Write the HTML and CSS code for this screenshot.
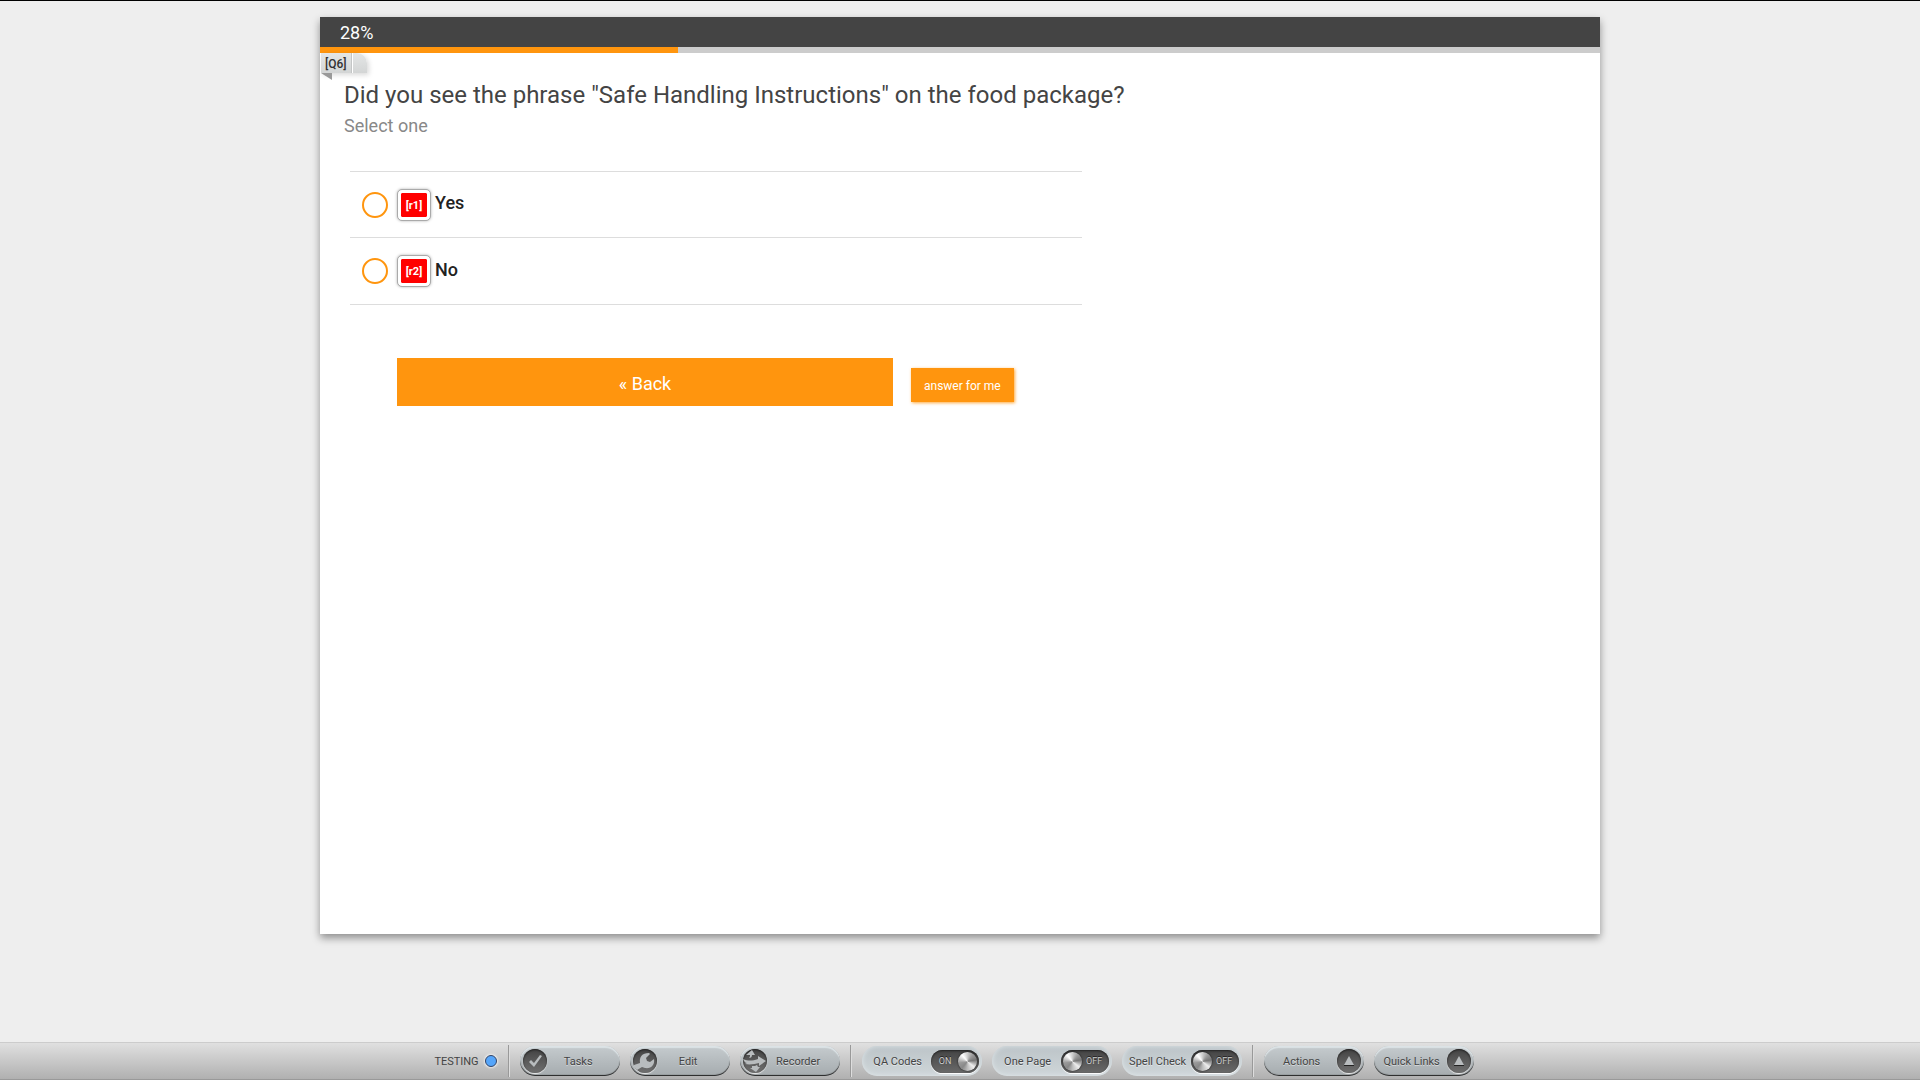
FILE: index.html
```html
<!DOCTYPE html>
<html lang="en">
<head>
  <meta charset="UTF-8">
  <meta name="viewport" content="width=device-width, initial-scale=1.0">
  <title>Survey</title>
  <link rel="stylesheet" href="styles.css">
</head>
<body>
  <main class="survey">
    <div class="progress-text">28%</div>
    <div class="progress-track"><div class="progress-bar" style="width: 28%"></div></div>

    <form class="question">
      <div class="qa-tag">
        <span class="qa-tag-label">[Q6]</span>
        <span class="qa-tag-end"></span>
        <span class="qa-tag-fold"></span>
      </div>
      <h1 class="question-text">Did you see the phrase "Safe Handling Instructions" on the food package?</h1>
      <h2 class="instruction-text">Select one</h2>

      <div class="answers">
        <label class="answer">
          <input type="radio" name="q6" value="r1">
          <span class="qa-code">[r1]</span>
          <span class="answer-text">Yes</span>
        </label>
        <label class="answer">
          <input type="radio" name="q6" value="r2">
          <span class="qa-code">[r2]</span>
          <span class="answer-text">No</span>
        </label>
      </div>

      <div class="nav-buttons">
        <button type="button" class="back-button">« Back</button>
        <button type="button" class="auto-button">answer for me</button>
      </div>
    </form>
  </main>

  <!-- Testing toolbar -->
  <footer class="toolbar">
    <div class="mode">TESTING <span class="led"></span></div>
    <span class="separator"></span>

    <button type="button" class="tool tool-left">
      <span class="tool-icon">
        <svg viewBox="0 0 24 24"><path d="M6 13l2-2 3 3 6-8 2 1-8 11z"/></svg>
      </span>
      <span class="tool-label">Tasks</span>
    </button>
    <button type="button" class="tool tool-left">
      <span class="tool-icon">
        <svg viewBox="0 0 24 24"><path d="M1 16l6-2C6 8 9 4 16 4l1 1-4 4 1 3 3 1 4-3c1 6-3 10-9 9l-3-1-5 3-3-3z"/></svg>
      </span>
      <span class="tool-label">Edit</span>
    </button>
    <button type="button" class="tool tool-left">
      <span class="tool-icon">
        <svg viewBox="0 0 24 24"><path d="M0 10c5 2 9 2 15 0V7l8 5-7 5v-3c-4 1-9 2-14 1l2-1c-2 0-3-2-4-4zM3 6l6-5 3 5H9c0 2-1 3-3 3 1-1 1-2 1-3zM9 17h3l2-1 1 2h2l-4 5-6-4h2z"/></svg>
      </span>
      <span class="tool-label">Recorder</span>
    </button>
    <span class="separator"></span>

    <label class="toggle">
      <span class="toggle-label">QA Codes</span>
      <input type="checkbox" class="toggle-input" checked>
      <span class="switch"><span class="state">ON</span><span class="knob"></span></span>
    </label>
    <label class="toggle">
      <span class="toggle-label">One Page</span>
      <input type="checkbox" class="toggle-input">
      <span class="switch"><span class="knob"></span><span class="state">OFF</span></span>
    </label>
    <label class="toggle">
      <span class="toggle-label">Spell Check</span>
      <input type="checkbox" class="toggle-input">
      <span class="switch"><span class="knob"></span><span class="state">OFF</span></span>
    </label>
    <span class="separator"></span>

    <button type="button" class="tool">
      <span class="tool-label">Actions</span>
      <span class="tool-icon">
        <svg viewBox="0 0 24 24"><path d="M12 7l5 9H7z"/><path class="shade" d="M7 16h10v1H7z"/></svg>
      </span>
    </button>
    <button type="button" class="tool">
      <span class="tool-label">Quick Links</span>
      <span class="tool-icon">
        <svg viewBox="0 0 24 24"><path d="M12 7l5 9H7z"/><path class="shade" d="M7 16h10v1H7z"/></svg>
      </span>
    </button>
  </footer>
</body>
</html>
```
FILE: styles.css
```css
* {
  box-sizing: border-box;
}
body {
  margin: 0;
  min-height: 100vh;
  display: flex;
  flex-direction: column;
  border-top: 1px solid #000;
  background-color: #eee;
  font-family: Roboto, Arial, sans-serif;
  color: #444;
}
button {
  font-family: inherit;
  border: none;
  padding: 0;
  cursor: pointer;
}
.survey {
  width: 100%;
  max-width: 1280px;
  min-height: calc(85vh - 1px);
  margin: 16px auto;
  background-color: #fff;
  box-shadow: 0 4px 8px rgba(0, 0, 0, 0.4);
}
.progress-text {
  height: 30px;
  padding-left: 20px;
  background-color: #444;
  color: #fff;
  font-size: 18px;
  line-height: 32px;
}
.progress-track {
  height: 6px;
  background-color: #ccc;
}
.progress-bar {
  height: 100%;
  background-color: #ff950e;
}
.question {
  position: relative;
  padding: 26px 24px;
}

/* Question code tag */
.qa-tag {
  position: absolute;
  top: 0;
  left: 1px;
  display: flex;
  height: 20px;
  border-top-right-radius: 10px;
  background: linear-gradient(#e4e6e6, #d3d5d5);
  box-shadow: 2px 2px 5px rgba(0, 0, 0, 0.15);
  color: #333;
  font-size: 12px;
  font-weight: 500;
  line-height: 22px;
}
.qa-tag-label {
  padding: 0 4px;
  border-right: 1px solid #c4c6c6;
}
.qa-tag-end {
  width: 15px;
  border-left: 1px solid #fff;
}
.qa-tag-fold {
  position: absolute;
  top: 100%;
  left: 0;
  border-top: 7px solid #999;
  border-left: 11px solid transparent;
}
.question-text,
.instruction-text {
  margin: 0;
  font-weight: 400;
}
.question-text {
  font-size: 24px;
  line-height: 32px;
}
.instruction-text {
  color: #888;
  font-size: 18px;
  line-height: 30px;
}

/* Answer list */
.answers {
  max-width: 732px;
  margin: 30px 0 0 6px;
  border-top: 1px solid #ddd;
}
.answer {
  display: flex;
  align-items: center;
  height: 66px;
  padding-left: 12px;
  border-bottom: 1px solid #ddd;
}
.answer:last-child {
  height: 67px;
}
.answer input {
  appearance: none;
  width: 26px;
  height: 26px;
  margin: 0 9px 0 0;
  border: 2px solid #ff950e;
  border-radius: 50%;
}
.answer input:checked {
  background-color: #ff950e;
}
.qa-code {
  width: 34px;
  height: 32px;
  padding: 3px;
  border: 1px solid #aaa;
  border-radius: 5px;
  background: #f00 content-box;
  box-shadow: 0 0 3px rgba(0, 0, 0, 0.3), inset 0 0 0 3px #fff;
  color: #fff;
  font-size: 11px;
  font-weight: 700;
  line-height: 25px;
  text-align: center;
}
.answer-text {
  padding: 0 0 4px 4px;
  color: #222;
  font-size: 18px;
  font-weight: 500;
}
.nav-buttons {
  display: flex;
  align-items: center;
  gap: 18px;
  max-width: 670px;
  margin: 53px 0 0 53px;
}
.back-button {
  flex: 0 1 496px;
  height: 48px;
  padding-top: 2px;
  background-color: #ff950e;
  color: #fff;
  font-size: 18px;
}
.auto-button {
  height: 34px;
  margin-top: 6px;
  padding: 2px 13px 0;
  background-color: #ff950e;
  box-shadow: 1px 1px 3px rgba(255, 149, 14, 0.8);
  color: #fff;
  font-size: 12px;
}

/* Toolbar */
.toolbar {
  display: flex;
  justify-content: center;
  align-items: center;
  gap: 10px;
  height: 38px;
  margin-top: auto;
  padding-right: 12px;
  border-top: 1px solid #ccc;
  border-bottom: 1px solid #999;
  background: linear-gradient(#e0e0e0, #b0b0b0);
  color: #444;
  font-size: 11px;
}
.mode {
  display: flex;
  align-items: center;
  gap: 6px;
  padding-right: 1px;
}
.led {
  width: 12px;
  height: 12px;
  border: 1px solid #346;
  border-radius: 50%;
  background-color: #55a5fa;
  box-shadow: 0 0 2px 1px #eee;
}
.separator {
  width: 2px;
  height: 32px;
  border-left: 1px solid #999;
  border-right: 1px solid #ddd;
}
.tool {
  display: flex;
  align-items: center;
  width: 100px;
  height: 30px;
  padding: 0 3px;
  border-radius: 15px;
  background: linear-gradient(#c5cbce, #a5abae);
  box-shadow: inset 0 2px 1px #dce3e6, inset 0 -1px 1px #222;
  color: #444;
  font-size: 11px;
  text-shadow: 0 1px 0 #d5d9db;
}
.tool-left {
  padding-right: 10px;
}
.tool-label {
  flex: 1;
  white-space: nowrap;
}
.tool-icon {
  flex: none;
  width: 24px;
  height: 24px;
  border-radius: 50%;
  background: linear-gradient(#444, #707070);
  box-shadow: 0 1px 1px #eee, inset 0 1px 2px #222;
}
.tool-icon svg {
  display: block;
  fill: #b8bcbe;
}
.tool-icon .shade {
  fill: #222;
}
.toggle {
  position: relative;
  display: flex;
  align-items: center;
  width: 120px;
  height: 30px;
  padding: 0 3px;
  border-radius: 15px;
  background: linear-gradient(#bcc4c8, #cfd6d9);
  box-shadow: inset 0 0 5px #dfe6e9;
  text-shadow: 0 1px 0 #e2e6e8;
}
.toggle-label {
  flex: 1;
  text-align: center;
  white-space: nowrap;
}
.toggle-input {
  position: absolute;
  right: 3px;
  opacity: 0;
}
.switch {
  display: flex;
  align-items: center;
  justify-content: space-between;
  width: 48px;
  height: 23px;
  padding: 0 2px;
  border-radius: 12px;
  background: linear-gradient(#444, #6a6a6a);
  box-shadow: 0 1px 1px #fff, inset 0 1px 2px #222;
}
.state {
  flex: 1;
  color: #ccc;
  font-size: 9px;
  text-align: center;
  text-shadow: 0 -1px 0 #222;
}
.knob {
  width: 19px;
  height: 19px;
  border-radius: 50%;
  background: conic-gradient(#ccc, #999 40deg, #777 80deg, #eee 130deg, #bbb 180deg, #888 220deg, #999 260deg, #fff 320deg, #ccc);
  box-shadow: 0 0 2px #111;
}
```
